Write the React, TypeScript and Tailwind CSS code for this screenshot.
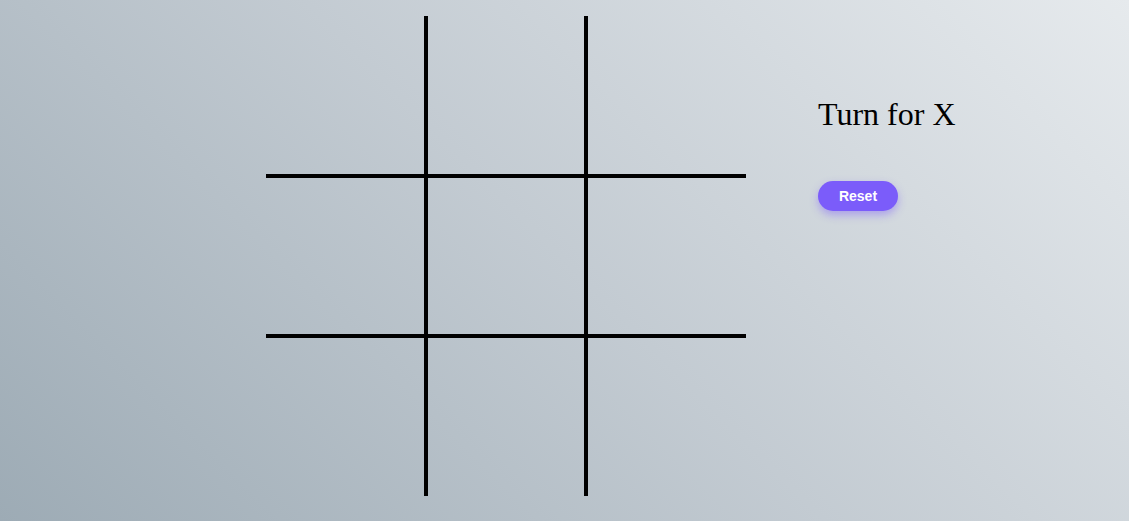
const cells = [0, 1, 2, 3, 4, 5, 6, 7, 8];

function cellBorder(i: number) {
  const row = Math.floor(i / 3);
  const col = i % 3;
  const parts = [];
  if (col > 0) parts.push("border-l-2");
  if (col < 2) parts.push("border-r-2");
  if (row > 0) parts.push("border-t-2");
  if (row < 2) parts.push("border-b-2");
  return parts.join(" ");
}

export default function App() {
  return (
    <div className="w-[1129px] h-[521px] overflow-hidden bg-[linear-gradient(45deg,#9dabb5_0%,#c3cbd2_50%,#e6eaed_100%)]">
      <div className="flex items-start pl-[266px] pt-[16px]">
        <div className="grid grid-cols-[160px_160px_160px] grid-rows-[160px_160px_160px]">
          {cells.map((i) => (
            <button key={i} className={"border-black " + cellBorder(i)} />
          ))}
        </div>
        <div className="ml-[72px] pt-[80px]" style={{ fontFamily: '"Liberation Serif", serif' }}>
          <h2 className="text-[32px] leading-[37px] text-black">Turn for X</h2>
          <button
            className="mt-[48px] w-[80px] h-[30px] rounded-full bg-[#7b5cfa] text-white text-[14px] font-bold shadow-[0_4px_8px_rgba(123,92,250,0.45)]"
            style={{ fontFamily: '"Liberation Sans", Arial, sans-serif' }}
          >
            Reset
          </button>
        </div>
      </div>
    </div>
  );
}
